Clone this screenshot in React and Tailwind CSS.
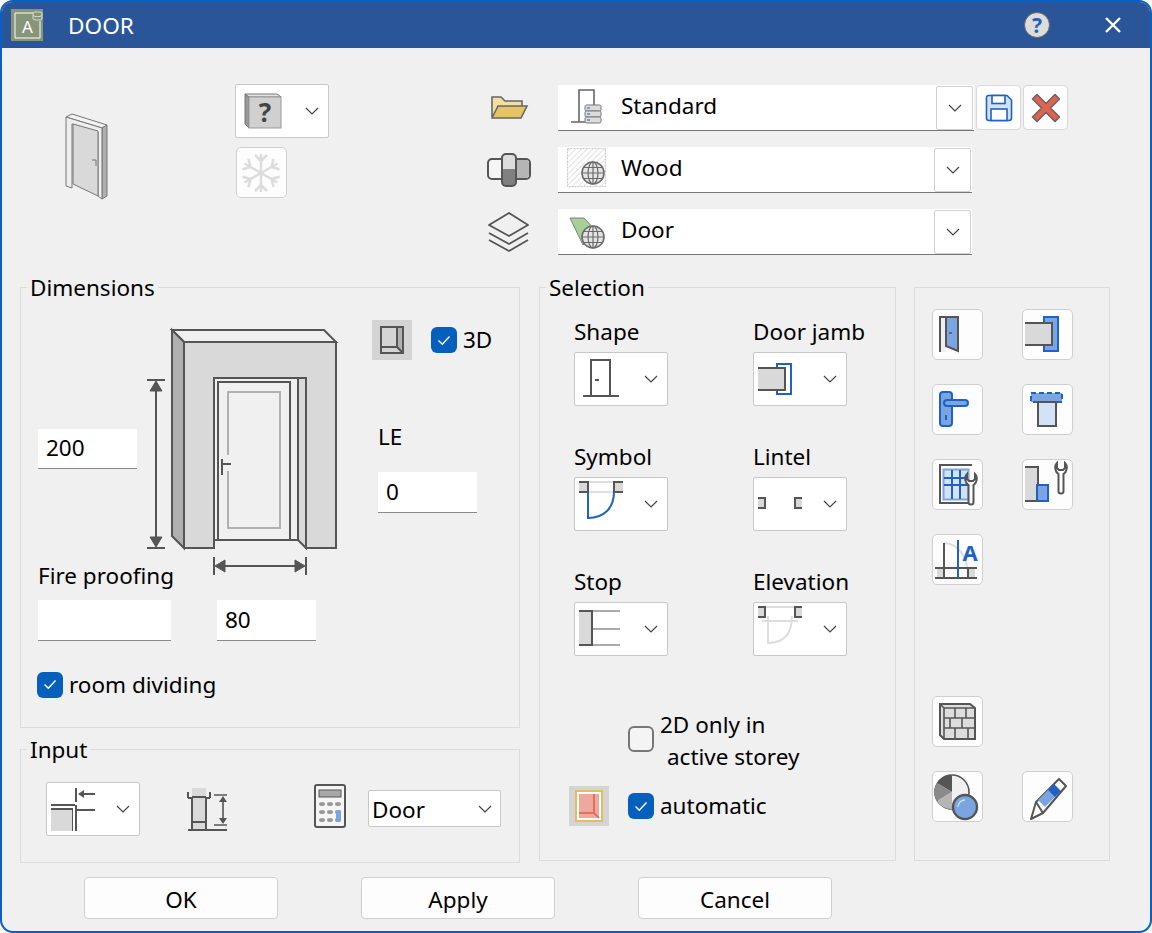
import React from 'react';

const DARK = '#555';
const BLUE = '#1f62c4';
const LIGHTBLUE = '#7aa5e0';
const PALEBLUE = '#d3e2f6';
const GRAY = '#d9d9d9';

// svg whose viewBox is given in screenshot coordinates
const Pic = ({ x, y, w, h, className = '', children }) => (
  <svg width={w} height={h} viewBox={`${x} ${y} ${w} ${h}`} className={`block shrink-0 ${className}`} fill="none">
    {children}
  </svg>
);

const Chevron = () => (
  <svg width="14" height="8" viewBox="0 0 14 8" className="block shrink-0" fill="none">
    <path d="M1 1l6 6 6-6" stroke="#444" strokeWidth="1.2" />
  </svg>
);

const Globe = ({ cx, cy, r = 11 }) => (
  <g stroke="#6b6b6b" strokeWidth="1.2" fill="none">
    <circle cx={cx} cy={cy} r={r} fill="#e4e4e4" strokeWidth="1.6" />
    <ellipse cx={cx} cy={cy} rx={r * 0.45} ry={r} />
    <path d={`M${cx} ${cy - r}V${cy + r}M${cx - r} ${cy}H${cx + r}M${cx - r + 2} ${cy - r * 0.5}H${cx + r - 2}M${cx - r + 2} ${cy + r * 0.5}H${cx + r - 2}`} />
  </g>
);

const Wrench = ({ x, y, h = 31 }) => (
  <path
    d={`M${x + 2} ${y}C${x - 1} ${y + 3} ${x} ${y + 9} ${x + 3.5} ${y + 11}V${y + h - 3}a2.5 2.5 0 0 0 5 0V${y + 11}C${x + 12} ${y + 9} ${x + 13} ${y + 3} ${x + 10} ${y}V${y + 5}L${x + 8} ${y + 7}H${x + 4}L${x + 2} ${y + 5}Z`}
    fill="#fff"
    stroke={DARK}
    strokeWidth="2"
  />
);

const Check = ({ on, className = '' }) => (
  <span className={`flex items-center justify-center w-[26px] h-[26px] shrink-0 rounded-[6px] ${on ? 'bg-[#0560bd]' : 'border-2 border-[#777] bg-[#f4f4f4]'} ${className}`}>
    {on && (
      <svg width="14" height="11" viewBox="0 0 14 11" fill="none">
        <path d="M1.5 5.5l3.8 3.8L12.5 1.5" stroke="#fff" strokeWidth="1.4" />
      </svg>
    )}
  </span>
);

const Field = ({ value, className = '' }) => (
  <div className={`bg-white border-b border-[#8a8a8a] pl-2 flex items-center leading-none ${className}`}>{value}</div>
);

const DropBox = ({ children, className = '' }) => (
  <div className={`w-[94px] h-[54px] bg-white border border-[#c8c8c8] rounded-[2px] flex items-center justify-between pr-[9px] ${className}`}>
    {children}
    <Chevron />
  </div>
);

const ToolButton = ({ children, className = '' }) => (
  <div className={`w-[51px] h-[51px] bg-[#fdfdfd] border border-[#cfcfcf] rounded-[5px] overflow-hidden ${className}`}>{children}</div>
);

const Group = ({ title, className = '', children }) => (
  <fieldset className={`border border-[#dcdcdc] p-0 m-0 min-w-0 ${className}`}>
    <legend className="ml-[6px] px-[3px] h-[30px] leading-[32px]">{title}</legend>
    {children}
  </fieldset>
);

const ComboRow = ({ icon, pic, label, width, btnH }) => (
  <div className="flex items-center h-[46px]">
    <div className="w-[74px] shrink-0">{icon}</div>
    <div className={`${width} h-[46px] bg-white border-b border-[#777] flex items-center`}>
      <div className="w-[63px] shrink-0">{pic}</div>
      <span className="flex-1 pb-[4px]">{label}</span>
      <div className={`w-[37px] ${btnH} border border-[#d0d0d0] rounded-[2px] flex items-center justify-center mr-[1px]`}>
        <Chevron />
      </div>
    </div>
  </div>
);

const DoorBig = () => (
  <Pic x={145} y={320} w={200} h={262}>
    <g stroke={DARK} strokeWidth="2">
      <path d="M172 330H324L336 342H184Z" fill="#f0f0f0" />
      <path d="M172 330L184 342V548L172 536Z" fill="#b0b0b0" />
      <path d="M184 342H336V548H306V378H214V548H184Z" fill={GRAY} />
      <path d="M298 378H306V548L298 540Z" fill={GRAY} />
      <path d="M214 378V540H298M218 540V382H290V540" />
    </g>
    <path d="M228 455V392H280V528H228V471" stroke="#b0b0b0" strokeWidth="2" />
    <path d="M222 459V475M222 464H231" stroke={DARK} strokeWidth="2" />
    <path d="M147 380H165M147 548H165M156 385V543M214 557V575M306 557V575M219 566H301" stroke={DARK} strokeWidth="2" />
    <path d="M156 381L150 391H162ZM156 547L150 537H162ZM215 566L225 560V572ZM305 566L295 560V572Z" fill={DARK} stroke={DARK} />
  </Pic>
);

const Snowflake = () => {
  const arm = 'M260 172V153M260 160L254 154M260 160L266 154';
  return (
    <Pic x={236} y={147} w={49} h={49}>
      <g stroke="#dcdcdc" strokeWidth="2.5">
        {[0, 60, 120, 180, 240, 300].map((a) => (
          <path key={a} d={arm} transform={`rotate(${a} 260 172)`} />
        ))}
      </g>
    </Pic>
  );
};

export default function App() {
  return (
    <div className="w-[1152px] h-[933px] box-border border-2 border-[#0b5fc0] rounded-[13px] overflow-hidden bg-[#f0f0f0] text-[22.5px] text-black font-['Noto_Sans','Open_Sans',sans-serif]">
      {/* title bar */}
      <div className="h-[46px] bg-[#2a5699] flex items-center text-white">
        <Pic x={11} y={9} w={32} h={32} className="ml-[9px]">
          <rect x="11" y="9" width="32" height="32" fill="#87957b" />
          <path d="M33 13H15V38H40V21" stroke="#fff" strokeWidth="1" />
          <text x="22" y="33" fill="#fff" fontSize="17">A</text>
          <path d="M33 13a5 2 0 0 1 9 0v6a5 2 0 0 1-9 0ZM33 15.5a5 2 0 0 0 9 0" stroke="#d8ddd2" strokeWidth="1" />
        </Pic>
        <span className="ml-[25px] text-[22.6px] pt-[1px]">DOOR</span>
        <div className="ml-auto w-[26px] h-[26px] rounded-full bg-[#dcdcdc] border border-[#666] flex items-center justify-center text-[#1f62c4] font-bold text-[21px] leading-none mr-[55px]">?</div>
        <svg width="16" height="16" viewBox="0 0 16 16" className="mr-[29px]" fill="none">
          <path d="M1 1l14 14M15 1L1 15" stroke="#fff" strokeWidth="2.4" />
        </svg>
      </div>

      {/* top area */}
      <div className="h-[224px] flex items-start">
        <Pic x={60} y={108} w={55} h={96} className="ml-[58px] mt-[60px]">
          <g stroke="#777" strokeWidth="1">
            <path d="M66 117L72 114L107 125L102 128Z" fill="#f2f2f2" />
            <path d="M102 128L107 125V196L102 199Z" fill="#b0b0b0" />
            <path d="M66 117L102 128V199L98 196V132L72 124V188L66 186Z" fill="#eee" />
            <path d="M73 124L98 131V196L73 184Z" fill={GRAY} />
            <path d="M92 160H96V166" />
          </g>
        </Pic>
        <div className="ml-[120px] w-[249px] shrink-0 pt-[36px]">
          <DropBox>
            <Pic x={243} y={92} w={38} h={38} className="ml-[8px]">
              <path d="M244 94L248 97V128L244 124Z" fill="#999" stroke="#777" />
              <path d="M244 94H276L280 97H248Z" fill="#e4e4e4" stroke="#777" />
              <rect x="248" y="97" width="32" height="31" fill="#d0d0d0" stroke="#999" />
              <text x="264" y="122" textAnchor="middle" fontSize="26" fontWeight="700" fill="#444">?</text>
            </Pic>
          </DropBox>
          <div className="ml-[1px] mt-[9px] w-[51px] h-[51px] bg-[#fdfdfd] border border-[#cfcfcf] rounded-[5px]">
            <Snowflake />
          </div>
        </div>
        <div className="pt-[37px] flex flex-col gap-[16px] relative">
          <ComboRow
            width="w-[416px]"
            btnH="h-[44px]"
            label="Standard"
            icon={
              <Pic x={484} y={92} w={50} h={34} className="">
                <path d="M492 118V98H501L505 102H522V107" fill="#f2dfa5" stroke="#666" strokeWidth="1.6" />
                <path d="M492 119L498 107H527L521 119Z" fill="#e4c467" stroke="#666" strokeWidth="1.6" />
              </Pic>
            }
            pic={
              <Pic x={558} y={85} w={50} h={45}>
                <path d="M579 105V90H594V106" fill="#fff" stroke="#666" strokeWidth="1.6" />
                <path d="M579 105V122M571 122H586" stroke="#666" strokeWidth="1.6" />
                {[105, 111, 117].map((y) => (
                  <g key={y}>
                    <rect x="585" y={y} width="16" height="6" rx="1.5" fill="#dcdcdc" stroke="#777" />
                    <path d={`M587 ${y + 3}h3`} stroke={BLUE} />
                  </g>
                ))}
              </Pic>
            }
          />
          <ComboRow
            width="w-[414px]"
            btnH="h-[44px]"
            label="Wood"
            icon={
              <Pic x={484} y={149} w={50} h={40}>
                <rect x="488" y="158" width="42" height="20" rx="4" fill="#f5f5f5" stroke={DARK} strokeWidth="2" />
                <path d="M516 159H526a3 3 0 0 1 3 3V174a3 3 0 0 1-3 3H516Z" fill="#b5b5b5" />
                <path d="M502 170V157a4 4 0 0 1 4-4H512a4 4 0 0 1 4 4V170Z" fill="#dcdcdc" />
                <path d="M502 168V181a4 4 0 0 0 4 4H512a4 4 0 0 0 4-4V168Z" fill="#808080" />
                <rect x="502" y="153" width="14" height="32" rx="4" stroke={DARK} strokeWidth="2" />
              </Pic>
            }
            pic={
              <Pic x={558} y={147} w={50} h={46}>
                <defs>
                  <pattern id="hatch" width="4" height="4" patternUnits="userSpaceOnUse" patternTransform="rotate(45)">
                    <path d="M0 0V4" stroke="#cfcfcf" strokeWidth="1.2" />
                  </pattern>
                </defs>
                <rect x="567.5" y="148.5" width="38" height="38" fill="url(#hatch)" stroke="#c8c8c8" strokeDasharray="2 1" />
                <Globe cx={593} cy={173} />
              </Pic>
            }
          />
          <ComboRow
            width="w-[414px]"
            btnH="h-[44px]"
            label="Door"
            icon={
              <Pic x={484} y={210} w={50} h={44}>
                <g stroke={DARK} strokeWidth="1.8" strokeLinejoin="round">
                  <path d="M489 240L509 251L528 240" />
                  <path d="M489 233L509 244L528 233" />
                  <path d="M509 213L528 225L509 236L489 225Z" fill="#f0f0f0" />
                </g>
              </Pic>
            }
            pic={
              <Pic x={558} y={209} w={50} h={46}>
                <path d="M570 218H584L597 232L583 245Z" fill="#a7cf96" stroke="#808080" />
                <Globe cx={593} cy={237} />
              </Pic>
            }
          />
          <div className="absolute left-[492px] top-[37px] flex gap-[2px]">
            <div className="w-[45px] h-[45px] bg-[#fdfdfd] border border-[#d8d8d8] rounded-[4px] flex items-center justify-center">
              <svg width="28" height="28" viewBox="0 0 28 28" fill="none">
                <path d="M3 1.5H22L26.5 6V24a2.5 2.5 0 0 1-2.5 2.5H4A2.5 2.5 0 0 1 1.5 24V3.5a2 2 0 0 1 1.5-2Z" fill={PALEBLUE} stroke={BLUE} strokeWidth="1.6" />
                <rect x="7" y="1.5" width="13" height="8" fill="#fff" stroke={BLUE} strokeWidth="1.6" />
                <rect x="6" y="15" width="16" height="11.5" fill="#fff" stroke={BLUE} strokeWidth="1.6" />
              </svg>
            </div>
            <div className="w-[45px] h-[45px] bg-[#fdfdfd] border border-[#d8d8d8] rounded-[4px] flex items-center justify-center">
              <svg width="30" height="30" viewBox="0 0 30 30" fill="none">
                <path d="M6 1.5L15 10.5L24 1.5L28.5 6L19.5 15L28.5 24L24 28.5L15 19.5L6 28.5L1.5 24L10.5 15L1.5 6Z" fill="#e0624f" stroke="#666" strokeWidth="1.6" strokeLinejoin="round" />
              </svg>
            </div>
          </div>
        </div>
      </div>

      {/* groups */}
      <div className="flex ml-[18px] items-start">
        <div className="w-[500px] shrink-0 flex flex-col gap-[6px]">
          <Group title="Dimensions" className="h-[456px]">
            <div className="flex">
              <div className="w-[133px] ml-[17px] mr-[-26px] shrink-0 pt-[127px]">
                <Field value="200" className="w-[99px] h-[40px]" />
                <div className="mt-[92px] h-[30px] leading-[30px] whitespace-nowrap">Fire proofing</div>
                <Field value="" className="mt-[9px] w-[133px] h-[41px]" />
              </div>
              <div className="w-[200px] shrink-0 pt-[18px]">
                <DoorBig />
                <Field value="80" className="ml-[72px] mt-[18px] w-[99px] h-[41px]" />
              </div>
              <div className="ml-[27px] pt-[18px]">
                <div className="flex items-center">
                  <div className="w-[40px] h-[40px] bg-[#d4d4d4] flex items-center justify-center">
                    <svg width="24" height="28" viewBox="0 0 24 28" fill="none">
                      <path d="M17 1H23V27L17 21Z" fill="#b0b0b0" />
                      <path d="M1 1H23V27H1ZM1 21H17L23 27M17 1V21" stroke={DARK} strokeWidth="2" />
                    </svg>
                  </div>
                  <Check on className="ml-[19px]" />
                  <span className="ml-[6px]">3D</span>
                </div>
                <div className="ml-[6px] mt-[62px] h-[30px] leading-[30px]">LE</div>
                <Field value="0" className="ml-[6px] mt-[20px] w-[99px] h-[41px]" />
              </div>
            </div>
            <div className="flex items-center ml-[16px] mt-[27px]">
              <Check on />
              <span className="ml-[6px]">room dividing</span>
            </div>
          </Group>
          <Group title="Input" className="h-[129px]">
            <div className="flex items-start">
              <DropBox className="ml-[25px] mt-[18px]">
                <Pic x={47} y={783} w={52} h={52}>
                  <path d="M51 805H75M51 809H72V831M76 805V831M76 810H95M76 788V802" stroke={DARK} strokeWidth="2" />
                  <rect x="51" y="810" width="21" height="21" fill={GRAY} />
                  <path d="M95 794H81" stroke={DARK} strokeWidth="2" />
                  <path d="M78 794L84 790V798Z" fill={DARK} />
                </Pic>
              </DropBox>
              <Pic x={186} y={786} w={44} h={48} className="ml-[46px] mt-[22px]">
                <rect x="192" y="788" width="14" height="42" fill={GRAY} />
                <path d="M192 797V830M206 797V830M188 830H227M192 822H206M192 797H206M188 798V792M210 798V792M192 798H188M206 798H210" stroke={DARK} strokeWidth="2" />
                <path d="M214 795H227M214 825H227M223 798V822" stroke={DARK} strokeWidth="1.6" />
                <path d="M223 796L219 802H227ZM223 824L219 818H227Z" fill={DARK} />
              </Pic>
              <Pic x={314} y={784} w={32} h={44} className="ml-[84px] mt-[20px]">
                <rect x="315" y="785" width="30" height="42" rx="2" fill="#f5f5f5" stroke={DARK} strokeWidth="2" />
                <rect x="319" y="790" width="22" height="7" fill="#a8a8a8" stroke={DARK} />
                {[804, 812, 820].map((y) => [322, 330, 338].map((x) => (
                  <ellipse key={`${x}-${y}`} cx={x} cy={y} rx="3" ry="2" fill="#999" />
                )))}
                <rect x="336" y="810" width="5" height="12" rx="2" fill={LIGHTBLUE} />
              </Pic>
              <div className="ml-[22px] mt-[26px] w-[133px] h-[37px] bg-white border border-[#c8c8c8] rounded-[2px] flex items-center justify-between pl-[3px] pr-[8px]">
                <span className="pt-[2px]">Door</span>
                <Chevron />
              </div>
            </div>
          </Group>
        </div>

        <Group title="Selection" className="ml-[19px] w-[357px] h-[589px] shrink-0">
          <div className="ml-[34px] pt-[15px] grid grid-cols-[179px_120px] gap-y-[36px]">
            <div>
              <div className="h-[30px] leading-[30px] mb-[5px]">Shape</div>
              <DropBox>
                <Pic x={575} y={353} w={50} h={52}>
                  <path d="M591 396V360H610V396M583 396H619M595 380H599" stroke={DARK} strokeWidth="2" />
                </Pic>
              </DropBox>
            </div>
            <div>
              <div className="h-[30px] leading-[30px] mb-[5px]">Door jamb</div>
              <DropBox>
                <Pic x={754} y={353} w={50} h={52}>
                  <rect x="758" y="368" width="26" height="22" fill={GRAY} />
                  <path d="M758 368H785V390H758" stroke={DARK} strokeWidth="2" />
                  <path d="M777 367V364H791V394H777V391" stroke={BLUE} strokeWidth="2" />
                </Pic>
              </DropBox>
            </div>
            <div>
              <div className="h-[30px] leading-[30px] mb-[5px]">Symbol</div>
              <DropBox>
                <Pic x={575} y={478} w={50} h={52}>
                  <rect x="579" y="482" width="9" height="10" fill={GRAY} />
                  <rect x="614" y="482" width="9" height="10" fill={GRAY} />
                  <path d="M588 482H614M588 492H614" stroke="#ddd" strokeWidth="2" />
                  <path d="M579 482H588V492H579M623 482H614V492H623" stroke={DARK} strokeWidth="2" />
                  <path d="M588 492V518C604 518 614 508 614 492" stroke={BLUE} strokeWidth="2" />
                </Pic>
              </DropBox>
            </div>
            <div>
              <div className="h-[30px] leading-[30px] mb-[5px]">Lintel</div>
              <DropBox>
                <Pic x={754} y={478} w={50} h={52}>
                  <rect x="758" y="498" width="7" height="10" fill={GRAY} />
                  <rect x="795" y="498" width="7" height="10" fill={GRAY} />
                  <path d="M758 498H765V508H758M802 498H795V508H802" stroke={DARK} strokeWidth="2" />
                </Pic>
              </DropBox>
            </div>
            <div>
              <div className="h-[30px] leading-[30px] mb-[5px]">Stop</div>
              <DropBox>
                <Pic x={575} y={603} w={50} h={52}>
                  <rect x="579" y="611" width="13" height="34" fill={GRAY} />
                  <path d="M592 611H620M592 629H620M592 645H620" stroke="#aaa" strokeWidth="2" />
                  <path d="M579 611H592V645H579" stroke={DARK} strokeWidth="2" />
                </Pic>
              </DropBox>
            </div>
            <div>
              <div className="h-[30px] leading-[30px] mb-[5px]">Elevation</div>
              <DropBox>
                <Pic x={754} y={603} w={50} h={52}>
                  <rect x="758" y="607" width="7" height="10" fill={GRAY} />
                  <rect x="795" y="607" width="7" height="10" fill={GRAY} />
                  <path d="M765 607H795M762 621H798" stroke="#ddd" strokeWidth="2" />
                  <path d="M768 616V643C784 643 792 634 792 616" stroke="#ddd" strokeWidth="2" />
                  <path d="M758 607H765V617H758M802 607H795V617H802" stroke={DARK} strokeWidth="2" />
                </Pic>
              </DropBox>
            </div>
          </div>
          <div className="ml-[88px] mt-[53px] flex items-center h-[64px]">
            <Check className="mt-[-4px]" />
            <div className="ml-[6px] leading-[32px]">
              <div>2D only in</div>
              <div className="ml-[7px]">active storey</div>
            </div>
          </div>
          <div className="ml-[29px] mt-[13px] flex items-center">
            <div className="w-[40px] h-[40px] bg-[#d4d4d4] flex items-center justify-center">
              <svg width="28" height="32" viewBox="0 0 28 32" fill="none">
                <rect x="1" y="1" width="26" height="30" fill="#fff" stroke="#e3bd5c" strokeWidth="2" />
                <rect x="4" y="4" width="20" height="24" fill="#f0a79d" />
                <path d="M19 4V23H4M19 23L24 28" stroke="#e0624f" strokeWidth="1.6" />
              </svg>
            </div>
            <Check on className="ml-[19px]" />
            <span className="ml-[6px]">automatic</span>
          </div>
        </Group>

        <fieldset className="border border-[#dcdcdc] p-0 ml-[18px] mt-[15px] w-[196px] h-[574px] shrink-0">
          <div className="ml-[17px] mt-[21px] grid grid-cols-[51px_51px] gap-x-[39px] gap-y-[24px]">
            <ToolButton>
              <Pic x={933} y={310} w={49} h={49}>
                <path d="M940 317H946V352H940Z" fill="#eee" />
                <path d="M946 317H958V351L946 346Z" fill={LIGHTBLUE} />
                <path d="M940 352V317H958V351L946 346V317" stroke={DARK} strokeWidth="2" />
                <path d="M949 333H952" stroke={DARK} strokeWidth="1.6" />
              </Pic>
            </ToolButton>
            <ToolButton>
              <Pic x={1023} y={310} w={49} h={49}>
                <path d="M1044 317H1058V351H1044V345H1052V323H1044Z" fill={LIGHTBLUE} stroke={BLUE} strokeWidth="2" />
                <rect x="1025" y="323" width="27" height="22" fill={GRAY} />
                <path d="M1025 323H1052V345H1025" stroke={DARK} strokeWidth="2" />
              </Pic>
            </ToolButton>
            <ToolButton>
              <Pic x={933} y={385} w={49} h={49}>
                <rect x="940" y="392" width="12" height="34" rx="3" fill={LIGHTBLUE} stroke={BLUE} strokeWidth="2" />
                <rect x="944" y="400" width="24" height="6" rx="3" fill={LIGHTBLUE} stroke={BLUE} strokeWidth="2" />
                <path d="M946 415V420" stroke={BLUE} strokeWidth="2" />
              </Pic>
            </ToolButton>
            <ToolButton>
              <Pic x={1023} y={385} w={49} h={49}>
                <rect x="1031" y="393" width="31" height="9" fill={LIGHTBLUE} stroke={BLUE} strokeWidth="2" strokeDasharray="5 3" />
                <rect x="1038" y="402" width="18" height="24" fill={PALEBLUE} stroke={DARK} strokeWidth="2" />
              </Pic>
            </ToolButton>
            <ToolButton>
              <Pic x={933} y={460} w={49} h={49}>
                <path d="M972 465H940V503H968" stroke={DARK} strokeWidth="2" />
                <rect x="943.5" y="469.5" width="25" height="30" fill={PALEBLUE} stroke={LIGHTBLUE} strokeWidth="2" />
                <path d="M952 470V499M960 470V499M944 478H968M944 485H968" stroke={BLUE} strokeWidth="2" />
                <Wrench x={965} y={474} />
              </Pic>
            </ToolButton>
            <ToolButton>
              <Pic x={1023} y={460} w={49} h={49}>
                <rect x="1025" y="467" width="13" height="34" fill={GRAY} />
                <rect x="1037" y="485" width="11" height="16" fill={LIGHTBLUE} stroke={BLUE} strokeWidth="2" />
                <path d="M1025 467H1038V485M1025 501H1037" stroke={DARK} strokeWidth="2" />
                <Wrench x={1055} y={463} />
              </Pic>
            </ToolButton>
            <ToolButton>
              <Pic x={933} y={535} w={49} h={49}>
                <path d="M944 543C958 544 968 555 968 578" stroke="#ddd" strokeWidth="2" />
                <rect x="937" y="569" width="7" height="9" fill={GRAY} />
                <rect x="968" y="569" width="7" height="9" fill={GRAY} />
                <path d="M944 543V578M968 568V578M935 568H977M935 578H977" stroke={DARK} strokeWidth="2" />
                <path d="M958 540V578" stroke={BLUE} strokeWidth="2" />
                <text x="962.5" y="561" fontSize="22" fontWeight="700" fill={BLUE}>A</text>
              </Pic>
            </ToolButton>
          </div>
          <div className="ml-[17px] mt-[111px] grid grid-cols-[51px_51px] gap-x-[39px] gap-y-[24px]">
            <ToolButton className="col-span-2">
              <Pic x={933} y={697} w={49} h={49}>
                <path d="M940 704H970L975 708V739H944L940 735Z" fill="#ddd" stroke={DARK} strokeWidth="2" />
                <path d="M940 704L944 708V739M944 708H975M944 718H975M944 728H975M955 708V718M966 708V718M950 718V728M962 718V728M955 728V739M968 728V739" stroke={DARK} strokeWidth="1.6" />
              </Pic>
            </ToolButton>
            <ToolButton>
              <Pic x={933} y={772} w={49} h={49}>
                <circle cx="952" cy="792" r="17" fill="#f0f0f0" stroke={DARK} strokeWidth="1.6" />
                <path d="M952 792V775A17 17 0 0 0 937 783Z" fill={DARK} />
                <path d="M952 792L937 783A17 17 0 0 0 937 801Z" fill="#8a8a8a" />
                <path d="M952 792L937 801A17 17 0 0 0 952 809Z" fill="#b5b5b5" />
                <circle cx="965" cy="807" r="12" fill={LIGHTBLUE} stroke={DARK} strokeWidth="2.4" />
                <path d="M958 807a7 7 0 0 1 7-7" stroke="#cfe0f6" strokeWidth="1.4" />
              </Pic>
            </ToolButton>
            <ToolButton>
              <Pic x={1023} y={772} w={49} h={49}>
                <path d="M1031 819L1036 802L1059 779L1066 786L1043 813Z" fill="#fff" stroke={DARK} strokeWidth="2" strokeLinejoin="round" />
                <path d="M1038 800L1050 788L1057 795L1045 807Z" fill={LIGHTBLUE} />
                <path d="M1048 790L1054 784L1061 791L1055 797Z" fill={BLUE} />
                <path d="M1036 802L1043 813" stroke={DARK} strokeWidth="2" />
              </Pic>
            </ToolButton>
          </div>
        </fieldset>
      </div>

      {/* footer buttons */}
      <div className="ml-[82px] mt-[14px] flex gap-[83px]">
        {['OK', 'Apply', 'Cancel'].map((b) => (
          <div key={b} className="w-[194px] h-[42px] pt-[3px] bg-[#fdfdfd] border border-[#d0d0d0] rounded-[4px] flex items-center justify-center">{b}</div>
        ))}
      </div>
    </div>
  );
}
